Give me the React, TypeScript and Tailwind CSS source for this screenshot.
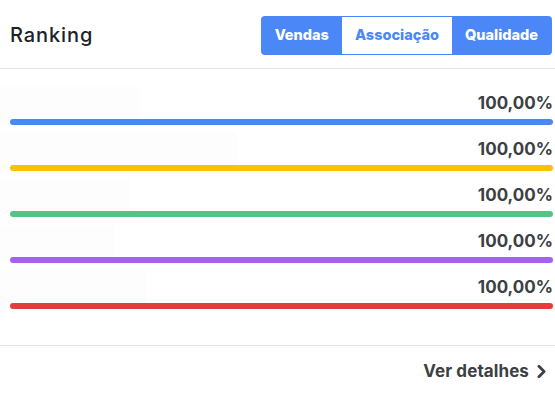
import { ChevronRight } from 'lucide-react';

type RankItem = {
    cor: string;
    valor: string;
    larguraLabel: string;
};

const itens: RankItem[] = [
    { cor: 'bg-[#4b87f7]', valor: '100,00%', larguraLabel: 'w-[140px]' },
    { cor: 'bg-[#fbc103]', valor: '100,00%', larguraLabel: 'w-[237px]' },
    { cor: 'bg-[#52c483]', valor: '100,00%', larguraLabel: 'w-[130px]' },
    { cor: 'bg-[#a562ee]', valor: '100,00%', larguraLabel: 'w-[115px]' },
    { cor: 'bg-[#e23c3c]', valor: '100,00%', larguraLabel: 'w-[147px]' },
];

const abas = ['Vendas', 'Associação', 'Qualidade'];

export default function App() {
    const ativa = 'Associação';
    return (
        <div className="w-[555px] h-[394px] bg-white flex flex-col font-['Inter',sans-serif] overflow-hidden">
            <div className="h-[69px] flex items-center justify-between pl-[10px] pr-[3px] border-b border-[#e4e4ea] pt-[1px]">
                <h1 className="text-[20px] font-medium text-[#202124] tracking-[0.9px]">
                    Ranking
                </h1>
                <div className="flex h-[39px] bg-[#4b87f7] rounded-[4px] p-[1px] mt-[1px]">
                    {abas.map((aba) => (
                        <button
                            key={aba}
                            className={
                                aba === ativa
                                    ? 'bg-white text-[#4b87f7] text-[14.5px] font-extrabold px-[13px] tracking-[0px]'
                                    : 'text-white text-[14.5px] font-extrabold px-[13px] tracking-[0px]'
                            }
                        >
                            {aba}
                        </button>
                    ))}
                </div>
            </div>

            <div className="flex-1 flex flex-col gap-[14px] pl-[10px] pr-[2px] pt-[24px]">
                {itens.map((item, i) => (
                    <div key={i} className="flex flex-col">
                        <div className="flex items-end justify-between h-[26px]">
                            <div className={`${item.larguraLabel} -ml-[10px] h-[35px] -mb-[3px] bg-[#fdfdfd]`} />
                            <span className="text-[17px] font-bold text-[#3c4043] leading-[20px] mb-[6px] tracking-[0px]">
                                {item.valor}
                            </span>
                        </div>
                        <div className={`h-[6px] rounded-full ${item.cor}`} />
                    </div>
                ))}
            </div>

            <div className="h-[49px] border-t border-[#e4e4ea] flex items-center justify-end pr-[3px]">
                <button className="flex items-center gap-[2px] text-[17px] font-bold text-[#3c4043] tracking-[0.1px] pt-[3px]">
                    Ver detalhes
                    <ChevronRight size={21} strokeWidth={3.2} />
                </button>
            </div>
        </div>
    );
}
